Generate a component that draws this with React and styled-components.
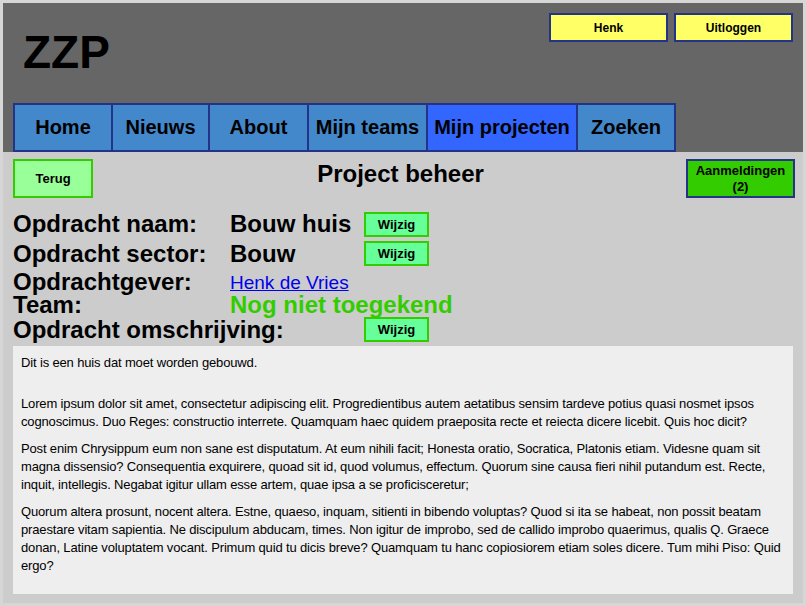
import React from 'react';
import styled, { createGlobalStyle } from 'styled-components';

const GlobalStyle = createGlobalStyle`
  html, body {
    margin: 0;
    padding: 0;
    background-color: #d6d6d6;
  }
  body {
    padding: 3px;
    font-family: 'Liberation Sans', Arial, sans-serif;
    color: #000;
  }
  * {
    box-sizing: border-box;
  }
`;

const Page = styled.div`
  width: 800px;
`;

const Header = styled.header`
  background-color: #666666;
  padding: 10px 10px 0 10px;
`;

const TopRow = styled.div`
  display: flex;
  justify-content: space-between;
  align-items: flex-start;
  height: 90px;
`;

const Logo = styled.h1`
  margin: 16px 0 0 0;
  padding-left: 10px;
  font-size: 46px;
  line-height: 46px;
  font-weight: bold;
`;

const UserButtons = styled.div`
  display: flex;
  gap: 6px;
`;

const YellowButton = styled.button`
  width: 119px;
  height: 29px;
  background-color: #ffff66;
  border: 2px solid #223388;
  font-family: 'Liberation Sans', Arial, sans-serif;
  font-weight: bold;
  font-size: 12px;
  color: #000;
  padding: 0;
`;

const Nav = styled.nav`
  display: flex;
  height: 49px;
  width: max-content;
  border: 1px solid #223388;
`;

const NavItem = styled.div`
  display: flex;
  align-items: center;
  justify-content: center;
  width: ${(props) => props.w}px;
  border: 1px solid #223388;
  background-color: ${(props) => (props.active ? '#3366ff' : '#4488cc')};
  font-weight: bold;
  font-size: 20px;
  white-space: nowrap;
`;

const Content = styled.main`
  background-color: #cccccc;
  padding: 7px 10px 9px 10px;
`;

const ActionRow = styled.div`
  display: grid;
  grid-template-columns: 1fr auto 1fr;
  align-items: start;
`;

const BackButton = styled.button`
  justify-self: start;
  width: 80px;
  height: 39px;
  background-color: #99ff99;
  border: 2px solid #33cc00;
  font-family: 'Liberation Sans', Arial, sans-serif;
  font-weight: bold;
  font-size: 13px;
  color: #000;
  padding: 0;
`;

const PageTitle = styled.h2`
  margin: 1px 0 0 0;
  padding: 0 5px 0 0;
  font-size: 24px;
  line-height: 28px;
  font-weight: bold;
  text-align: center;
`;

const SignupsButton = styled.button`
  justify-self: end;
  margin-right: -2px;
  width: 109px;
  height: 39px;
  background-color: #33cc00;
  border: 2px solid #223388;
  font-family: 'Liberation Sans', Arial, sans-serif;
  font-weight: bold;
  font-size: 13px;
  line-height: 16px;
  color: #000;
  padding: 0;
`;

const Fields = styled.div`
  margin-top: 11px;
  display: flex;
  flex-direction: column;
`;

const FieldRow = styled.div`
  display: grid;
  grid-template-columns: 217px 134px auto;
  align-items: center;
  height: ${(props) => props.h}px;
  line-height: ${(props) => props.h}px;
  font-size: 24px;
  font-weight: bold;
  white-space: nowrap;
`;

const Value = styled.span`
  color: ${(props) => (props.green ? '#33cc00' : '#000')};
`;

const PersonLink = styled.a`
  font-weight: normal;
  font-size: 19px;
  color: #0000ee;
  text-decoration: underline;
`;

const EditButton = styled.button`
  width: 65px;
  height: 25px;
  background-color: #66ff99;
  border: 2px solid #33cc00;
  font-family: 'Liberation Sans', Arial, sans-serif;
  font-weight: bold;
  font-size: 13px;
  line-height: normal;
  color: #000;
  padding: 0;
`;

const Description = styled.div`
  margin-top: 5px;
  height: 248px;
  background-color: #eeeeee;
  padding: 8px;
  font-size: 13px;
  line-height: 18px;
  letter-spacing: -0.15px;

  p {
    margin: 0 0 9px 0;
  }

  p.intro {
    margin-bottom: 23px;
  }
`;

const navItems = [
  { label: 'Home', w: 98 },
  { label: 'Nieuws', w: 97 },
  { label: 'About', w: 99 },
  { label: 'Mijn teams', w: 119 },
  { label: 'Mijn projecten', w: 150, active: true },
  { label: 'Zoeken', w: 98 },
];

export default function App() {
  return (
    <Page>
      <GlobalStyle />
      <Header>
        <TopRow>
          <Logo>ZZP</Logo>
          <UserButtons>
            <YellowButton>Henk</YellowButton>
            <YellowButton>Uitloggen</YellowButton>
          </UserButtons>
        </TopRow>
        <Nav>
          {navItems.map((item) => (
            <NavItem key={item.label} w={item.w} active={item.active}>
              {item.label}
            </NavItem>
          ))}
        </Nav>
      </Header>

      <Content>
        <ActionRow>
          <BackButton>Terug</BackButton>
          <PageTitle>Project beheer</PageTitle>
          <SignupsButton>
            Aanmeldingen
            <br />
            (2)
          </SignupsButton>
        </ActionRow>

        <Fields>
          <FieldRow h={30}>
            <span>Opdracht naam:</span>
            <Value>Bouw huis</Value>
            <EditButton>Wijzig</EditButton>
          </FieldRow>
          <FieldRow h={29}>
            <span>Opdracht sector:</span>
            <Value>Bouw</Value>
            <EditButton>Wijzig</EditButton>
          </FieldRow>
          <FieldRow h={25}>
            <span>Opdrachtgever:</span>
            <span>
              <PersonLink href="#">Henk de Vries</PersonLink>
            </span>
            <span />
          </FieldRow>
          <FieldRow h={24}>
            <span>Team:</span>
            <Value green>Nog niet toegekend</Value>
            <span />
          </FieldRow>
          <FieldRow h={24}>
            <span>Opdracht omschrijving:</span>
            <span />
            <EditButton>Wijzig</EditButton>
          </FieldRow>
        </Fields>

        <Description>
          <p className="intro">Dit is een huis dat moet worden gebouwd.</p>
          <p>
            Lorem ipsum dolor sit amet, consectetur adipiscing elit. Progredientibus autem aetatibus sensim tardeve potius
            quasi nosmet ipsos cognoscimus. Duo Reges: constructio interrete. Quamquam haec quidem praeposita recte et
            reiecta dicere licebit. Quis hoc dicit?
          </p>
          <p>
            Post enim Chrysippum eum non sane est disputatum. At eum nihili facit; Honesta oratio, Socratica, Platonis
            etiam. Videsne quam sit magna dissensio? Consequentia exquirere, quoad sit id, quod volumus, effectum. Quorum
            sine causa fieri nihil putandum est. Recte, inquit, intellegis. Negabat igitur ullam esse artem, quae ipsa a
            se proficisceretur;
          </p>
          <p>
            Quorum altera prosunt, nocent altera. Estne, quaeso, inquam, sitienti in bibendo voluptas? Quod si ita se
            habeat, non possit beatam praestare vitam sapientia. Ne discipulum abducam, times. Non igitur de improbo, sed
            de callido improbo quaerimus, qualis Q. Graece donan, Latine voluptatem vocant. Primum quid tu dicis breve?
            Quamquam tu hanc copiosiorem etiam soles dicere. Tum mihi Piso: Quid ergo?
          </p>
        </Description>
      </Content>
    </Page>
  );
}
